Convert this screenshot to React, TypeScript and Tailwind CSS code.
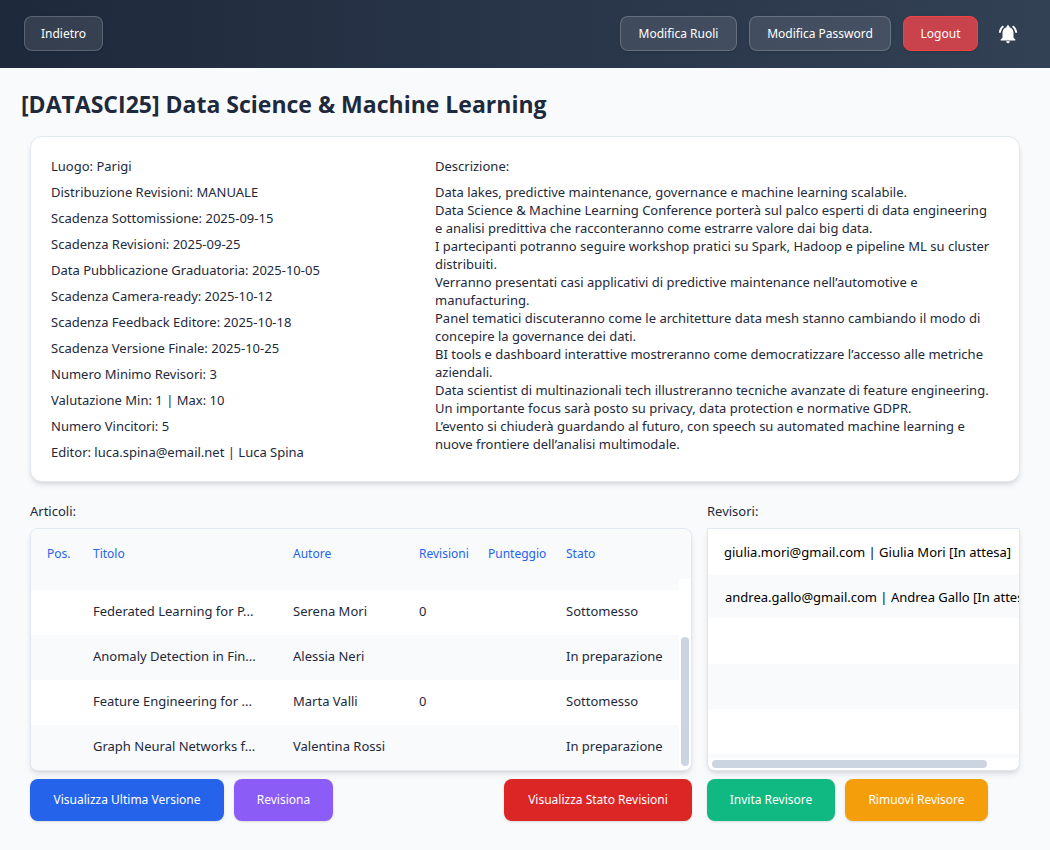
import React from "react";
import { MdNotificationsActive } from "react-icons/md";

const details = [
  "Luogo: Parigi",
  "Distribuzione Revisioni: MANUALE",
  "Scadenza Sottomissione: 2025-09-15",
  "Scadenza Revisioni: 2025-09-25",
  "Data Pubblicazione Graduatoria: 2025-10-05",
  "Scadenza Camera-ready: 2025-10-12",
  "Scadenza Feedback Editore: 2025-10-18",
  "Scadenza Versione Finale: 2025-10-25",
  "Numero Minimo Revisori: 3",
  "Valutazione Min: 1 | Max: 10",
  "Numero Vincitori: 5",
  "Editor: luca.spina@email.net | Luca Spina",
];

const description = [
  "Data lakes, predictive maintenance, governance e machine learning scalabile.",
  "Data Science & Machine Learning Conference porterà sul palco esperti di data engineering e analisi predittiva che racconteranno come estrarre valore dai big data.",
  "I partecipanti potranno seguire workshop pratici su Spark, Hadoop e pipeline ML su cluster distribuiti.",
  "Verranno presentati casi applicativi di predictive maintenance nell’automotive e manufacturing.",
  "Panel tematici discuteranno come le architetture data mesh stanno cambiando il modo di concepire la governance dei dati.",
  "BI tools e dashboard interattive mostreranno come democratizzare l’accesso alle metriche aziendali.",
  "Data scientist di multinazionali tech illustreranno tecniche avanzate di feature engineering.",
  "Un importante focus sarà posto su privacy, data protection e normative GDPR.",
  "L’evento si chiuderà guardando al futuro, con speech su automated machine learning e nuove frontiere dell’analisi multimodale.",
];

const articles = [
  { title: "Federated Learning for P...", author: "Serena Mori", reviews: "0", status: "Sottomesso" },
  { title: "Anomaly Detection in Fin...", author: "Alessia Neri", reviews: "", status: "In preparazione" },
  { title: "Feature Engineering for ...", author: "Marta Valli", reviews: "0", status: "Sottomesso" },
  { title: "Graph Neural Networks f...", author: "Valentina Rossi", reviews: "", status: "In preparazione" },
];

const headers = ["Pos.", "Titolo", "Autore", "Revisioni", "Punteggio", "Stato"];

function HeaderButton({ children, look }: { children: React.ReactNode; look: string }) {
  return (
    <button type="button" className={"h-[35px] rounded-lg border px-3 text-xs text-white shadow-sm " + look}>
      {children}
    </button>
  );
}

function ActionButton({ children, look }: { children: React.ReactNode; look: string }) {
  return (
    <button
      type="button"
      className={"h-[42px] rounded-lg px-5 text-xs whitespace-nowrap text-white shadow-sm " + look}
    >
      {children}
    </button>
  );
}

export default function App() {
  return (
    <div className="min-h-screen bg-[#f8fafc] font-['Noto_Sans',sans-serif] text-[13px] leading-[18px] text-[#1e293b]">
      <header className="flex h-[68px] items-start gap-3 bg-linear-to-r from-[#1e293b] to-[#334155] px-6 pt-4">
        <HeaderButton look="min-w-[79px] border-white/20 bg-white/10">Indietro</HeaderButton>
        <div className="flex-1" />
        <HeaderButton look="min-w-[117px] border-white/20 bg-white/10">Modifica Ruoli</HeaderButton>
        <HeaderButton look="min-w-[142px] border-white/20 bg-white/10">Modifica Password</HeaderButton>
        <HeaderButton look="min-w-[75px] border-[#ef4444] bg-[#c9434d]">Logout</HeaderButton>
        <button
          type="button"
          aria-label="Notifiche"
          className="flex h-9 w-9 items-center justify-center text-white"
        >
          <MdNotificationsActive size={22} />
        </button>
      </header>

      <main>
        <h1 className="px-[21px] pt-5 font-['Open_Sans',sans-serif] text-[23px] leading-8 font-bold">
          [DATASCI25] Data Science &amp; Machine Learning
        </h1>

        <div className="px-[30px] pt-4">
          <section className="grid grid-cols-[344px_minmax(0,1fr)] gap-10 rounded-xl border border-[#e2e8f0] bg-white p-5 shadow-md">
            <ul className="flex flex-col gap-2">
              {details.map((line) => (
                <li key={line}>{line}</li>
              ))}
            </ul>
            <div>
              <h2>Descrizione:</h2>
              <div className="mt-2 pr-1">
                {description.map((line) => (
                  <p key={line}>{line}</p>
                ))}
              </div>
            </div>
          </section>

          <div className="mt-5 grid grid-cols-[minmax(0,1fr)_313px] gap-[15px]">
            <section>
              <h2 className="mb-2">Articoli:</h2>
              <div className="flex overflow-hidden rounded-lg border border-[#e2e8f0] bg-white shadow-md">
                <table className="flex-1 table-fixed border-collapse text-left">
                  <colgroup>
                    <col className="w-[46px]" />
                    <col className="w-[200px]" />
                    <col className="w-[126px]" />
                    <col className="w-[69px]" />
                    <col className="w-[78px]" />
                    <col className="w-[129px]" />
                  </colgroup>
                  <thead>
                    <tr className="h-[61px] bg-[#f8fafc] text-xs text-[#2563eb]">
                      {headers.map((label) => (
                        <th key={label} className="pb-3 pl-4 font-normal">
                          {label}
                        </th>
                      ))}
                    </tr>
                  </thead>
                  <tbody>
                    {articles.map((article) => (
                      <tr key={article.title} className="h-[45px] even:bg-[#f8fafc]">
                        <td />
                        <td className="pb-1 pl-4 whitespace-nowrap">{article.title}</td>
                        <td className="pb-1 pl-4 whitespace-nowrap">{article.author}</td>
                        <td className="pb-1 pl-4">{article.reviews}</td>
                        <td />
                        <td className="pb-1 pl-4 whitespace-nowrap">{article.status}</td>
                      </tr>
                    ))}
                  </tbody>
                </table>
                <div className="flex w-3 flex-col items-center justify-between pb-1">
                  <div className="h-[50px] w-full bg-[#f8fafc]" />
                  <div className="h-[129px] w-2 rounded-full bg-[#cbd5e1]" />
                </div>
              </div>
              <div className="mt-2 flex gap-[10px]">
                <ActionButton look="min-w-[194px] bg-[#2563eb]">Visualizza Ultima Versione</ActionButton>
                <ActionButton look="min-w-[99px] bg-[#8b5cf6]">Revisiona</ActionButton>
                <div className="flex-1" />
                <ActionButton look="min-w-[188px] bg-[#dc2626]">Visualizza Stato Revisioni</ActionButton>
              </div>
            </section>

            <section>
              <h2 className="mb-2">Revisori:</h2>
              <div className="overflow-hidden rounded-b-lg border border-[#e2e8f0] bg-white text-black shadow-md">
                <ul className="whitespace-nowrap">
                  <li className="flex h-[46px] items-center pl-4">giulia.mori@gmail.com | Giulia Mori [In attesa]</li>
                  <li className="flex h-[43px] items-center bg-[#f8fafc] pl-[17px]">
                    andrea.gallo@gmail.com | Andrea Gallo [In attesa]
                  </li>
                  <li className="h-[46px]" />
                  <li className="h-[45px] bg-[#f8fafc]" />
                  <li className="h-[45px]" />
                  <li className="h-1 bg-[#f8fafc]" />
                </ul>
                <div className="flex h-3 items-center px-1">
                  <div className="h-2 w-[275px] rounded-full bg-[#cbd5e1]" />
                </div>
              </div>
              <div className="mt-2 flex gap-[10px]">
                <ActionButton look="min-w-[128px] bg-[#10b981]">Invita Revisore</ActionButton>
                <ActionButton look="min-w-[143px] bg-[#f59e0b]">Rimuovi Revisore</ActionButton>
              </div>
            </section>
          </div>
        </div>
      </main>
    </div>
  );
}
